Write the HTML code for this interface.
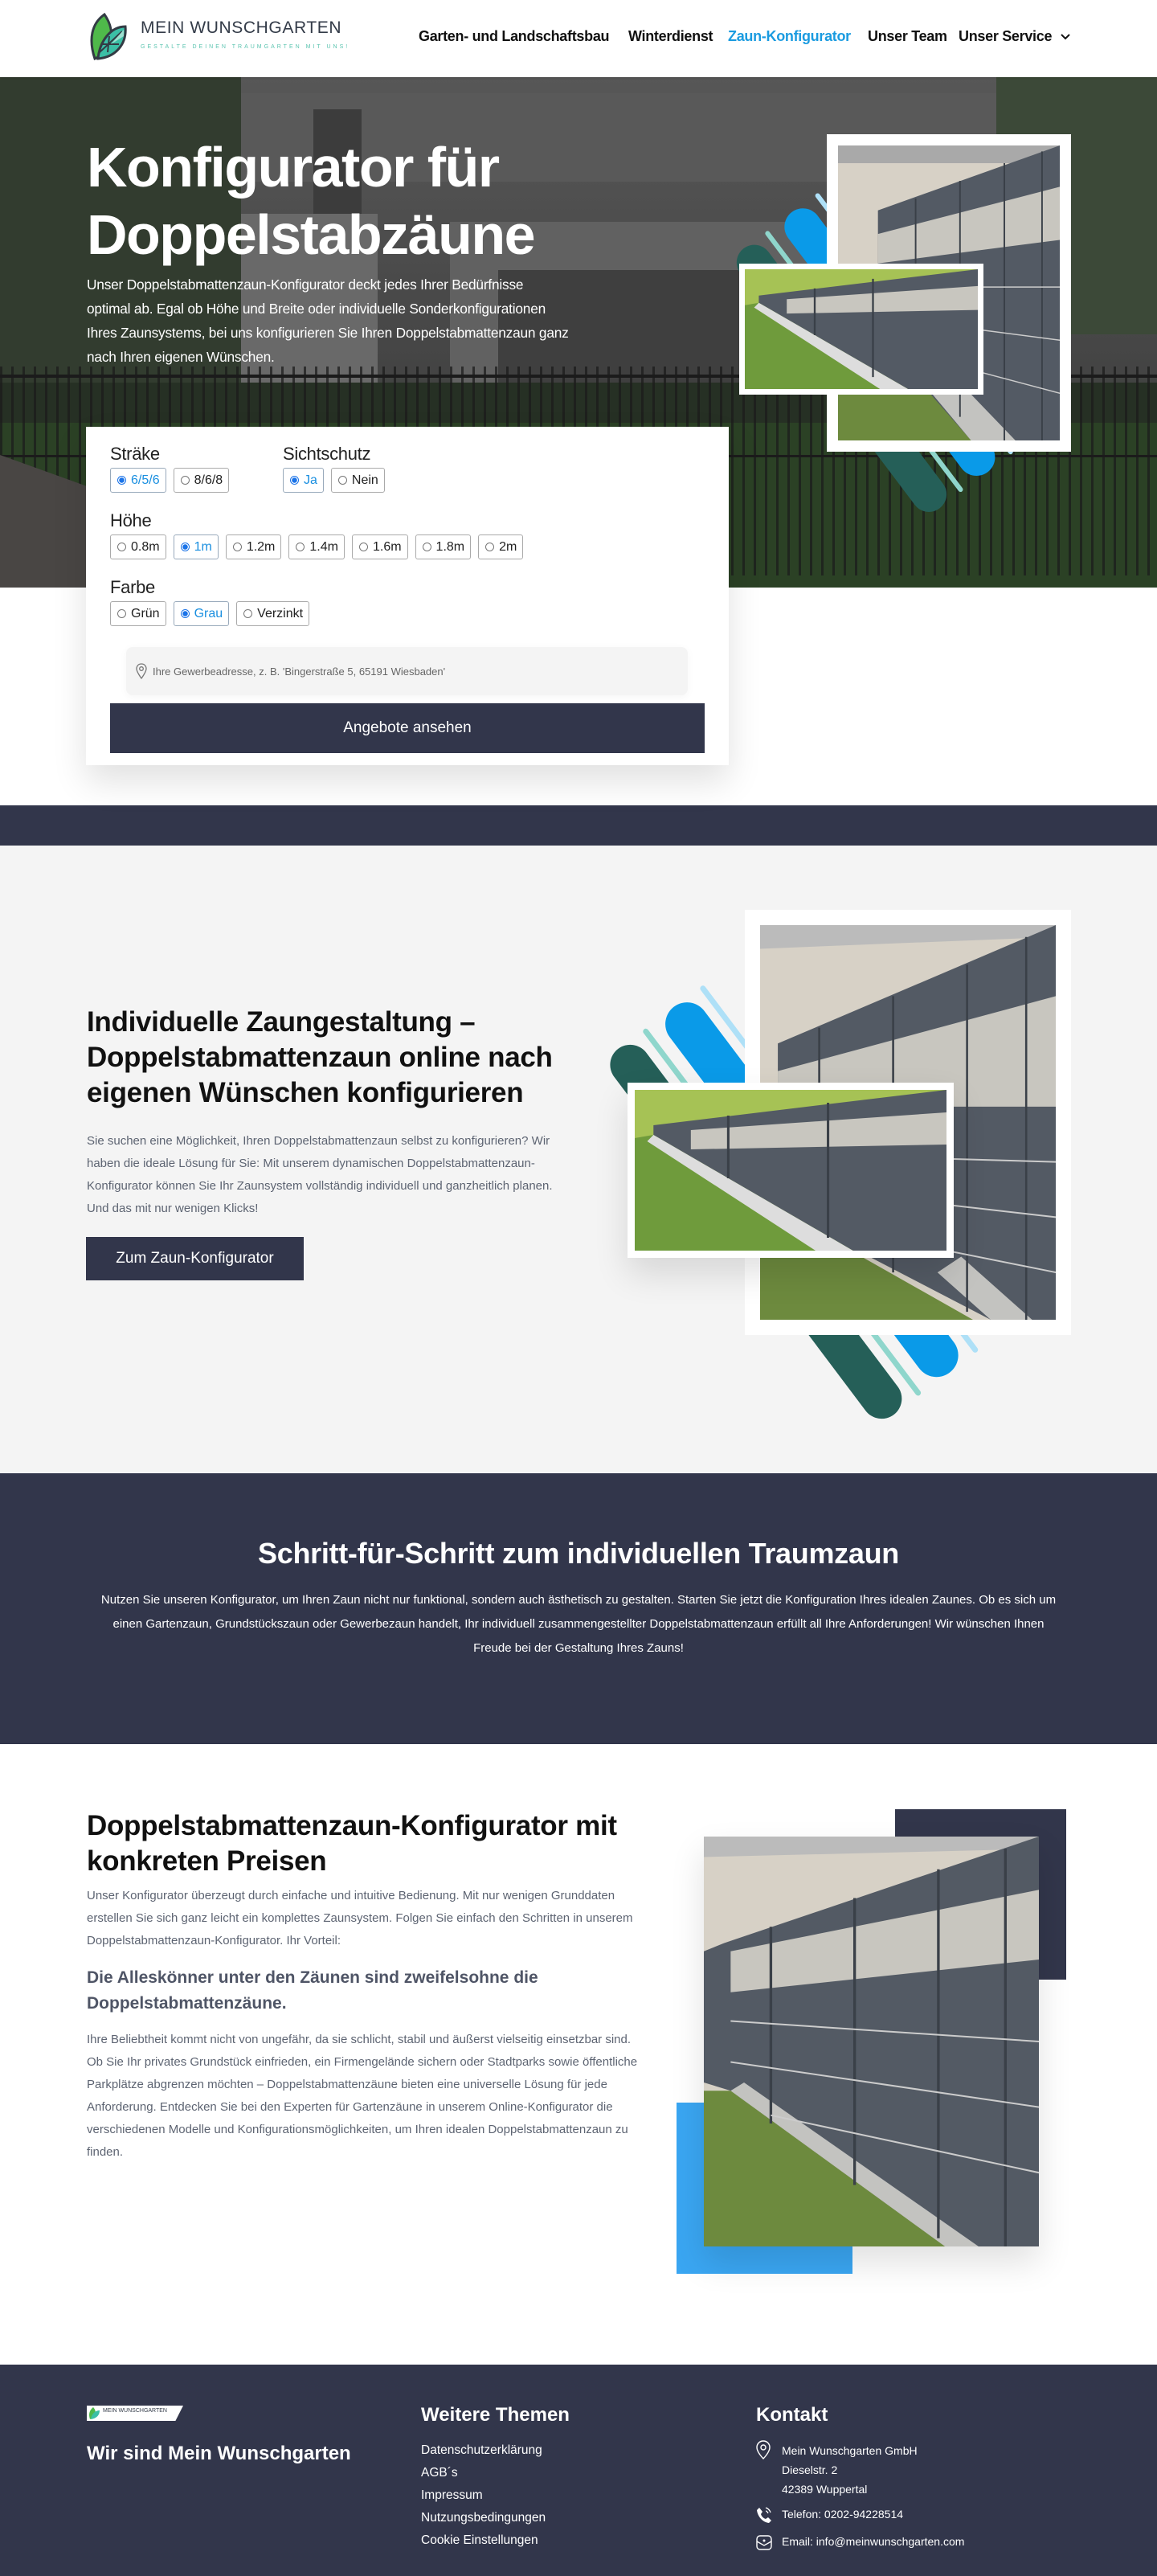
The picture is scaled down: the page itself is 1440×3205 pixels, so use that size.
<!DOCTYPE html>
<html lang="de"><head><meta charset="utf-8">
<style>
*{margin:0;padding:0;box-sizing:border-box}
body{width:1440px;height:3205px;font-family:"Liberation Sans",Arial,sans-serif;background:#fff;position:relative;overflow:hidden;color:#111}
.abs{position:absolute}
header{position:absolute;top:0;left:0;width:1440px;height:96px;background:#fff;z-index:5;box-shadow:0 1px 3px rgba(0,0,0,.15)}
.nav{position:absolute;top:35px;font-size:18px;font-weight:bold;color:#111;white-space:nowrap;letter-spacing:-0.3px}
.hero{position:absolute;top:96px;left:0;width:1440px;height:635px;overflow:hidden}
.frame{position:absolute;background:#fff}
.frame svg{position:absolute;display:block}
.bars{position:absolute;display:flex;align-items:stretch}
.bars div{border-radius:30px}
.opt{display:inline-flex;align-items:center;height:31px;border:1px solid #aaa;border-radius:3px;padding:0 7px 0 8px;font-size:16px;color:#222;margin-right:9px;background:#fff}
.opt i{display:inline-block;width:11px;height:11px;border:1px solid #777;border-radius:50%;margin-right:6px;background:#fff}
.opt.sel{color:#1a8fe0;border-color:#9ab}
.opt.sel i{border-color:#1a73e8;background:radial-gradient(circle,#1a73e8 0 3px,#fff 3.5px)}
.lbl{font-size:22px;color:#222;letter-spacing:-0.3px}
h2{font-size:35px;font-weight:bold;line-height:44px;color:#111;letter-spacing:-0.3px}
.p{font-size:15px;line-height:28px;color:#5d6472}
.flink{font-size:15.5px;color:#fff;line-height:28px}
</style></head><body>

<header>
  <svg class="abs" style="left:108px;top:15px" width="55" height="63" viewBox="0 0 55 63">
    <path d="M22 3 C6 14 2 34 10 58 C30 50 38 26 22 3Z" fill="#4fb94a" stroke="#333b44" stroke-width="3"/>
    <path d="M48 18 C30 18 16 36 14 58 C36 56 50 40 48 18Z" fill="#3bbfa6" stroke="#333b44" stroke-width="3"/>
    <path d="M16 50 L44 24 M20 40 L40 40 M28 30 L26 50" stroke="#333b44" stroke-width="2" fill="none"/>
    <path d="M30 40 L46 22 L46 30Z" fill="#9de0d0"/>
  </svg>
  <div class="abs" style="left:175px;top:23px;font-size:21px;color:#333b48;letter-spacing:0.6px">MEIN WUNSCHGARTEN</div>
  <div class="abs" style="left:175px;top:55px;font-size:7px;color:#5cc4b0;letter-spacing:3px">GESTALTE DEINEN TRAUMGARTEN MIT UNS!</div>
  <div class="nav" style="left:521px">Garten- und Landschaftsbau</div>
  <div class="nav" style="left:782px">Winterdienst</div>
  <div class="nav" style="left:906px;color:#1a9be0">Zaun-Konfigurator</div>
  <div class="nav" style="left:1080px">Unser Team</div>
  <div class="nav" style="left:1193px">Unser Service</div>
  <svg class="abs" style="left:1320px;top:41px" width="12" height="10" viewBox="0 0 12 10"><path d="M1 2 L6 7 L11 2" stroke="#111" stroke-width="2" fill="none"/></svg>
</header>

<div class="hero">
  <svg width="1440" height="635" viewBox="0 0 1440 635" style="position:absolute;left:0;top:0">
    <defs>
      <linearGradient id="hg" x1="0" y1="0" x2="0" y2="1"><stop offset="0" stop-color="#6b6b6b"/><stop offset=".55" stop-color="#555"/><stop offset="1" stop-color="#2f3a2c"/></linearGradient>
      <pattern id="fence" width="14" height="200" patternUnits="userSpaceOnUse"><rect width="14" height="200" fill="none"/><rect x="0" width="3" height="200" fill="#222"/></pattern>
    </defs>
    <rect width="1440" height="635" fill="url(#hg)"/>
    <rect x="0" y="0" width="300" height="380" fill="#3d4a3a"/>
    <rect x="1240" y="0" width="200" height="320" fill="#4a5a45"/>
    <rect x="300" y="20" width="940" height="110" fill="#6d6d6d"/>
    <rect x="390" y="40" width="60" height="400" fill="#4a4a4a"/>
    <rect x="560" y="180" width="460" height="230" fill="#777"/>
    <rect x="620" y="240" width="320" height="170" fill="#4d4d4d"/>
    <rect x="300" y="170" width="170" height="250" fill="#818181"/>
    <rect x="0" y="380" width="1440" height="255" fill="#2f3b2c"/>
    <rect x="0" y="430" width="1440" height="205" fill="#35502e"/>
    <rect x="0" y="360" width="1440" height="260" fill="url(#fence)" opacity=".75"/>
    <rect x="0" y="370" width="1440" height="4" fill="#222"/>
    <rect x="0" y="470" width="1440" height="3" fill="#222"/>
    <path d="M0 470 L250 560 L250 635 L0 635Z" fill="#5a5653"/>
    <rect width="1440" height="635" fill="#000" opacity=".18"/>
  </svg>
  <div class="abs" style="left:108px;top:70px;font-size:70px;font-weight:bold;color:#fff;line-height:84px;letter-spacing:-1.5px">Konfigurator für<br>Doppelstabzäune</div>
  <div class="abs" style="left:108px;top:243px;width:600px;font-size:17.3px;line-height:30px;color:#fff;letter-spacing:-0.2px">Unser Doppelstabmattenzaun-Konfigurator deckt jedes Ihrer Bedürfnisse optimal ab. Egal ob Höhe und Breite oder individuelle Sonderkonfigurationen Ihres Zaunsystems, bei uns konfigurieren Sie Ihren Doppelstabmattenzaun ganz nach Ihren eigenen Wünschen.</div>
</div>

<!-- hero bars -->
<div class="bars" style="left:1016px;top:240px;height:405px;transform:rotate(-37deg);z-index:1">
  <div style="width:44px;background:#255f58"></div><div style="width:10px;background:none"></div>
  <div style="width:6px;background:#8fd6cc"></div><div style="width:14px;background:none"></div>
  <div style="width:46px;background:#0a9ae8"></div><div style="width:12px;background:none"></div>
  <div style="width:6px;background:#aee0f7"></div>
</div>

<!-- hero frames -->
<div class="frame" style="left:1029px;top:167px;width:304px;height:395px;z-index:2">
  <svg style="left:14px;top:14px" width="276" height="367" viewBox="0 0 100 100" preserveAspectRatio="none">
    <rect width="100" height="100" fill="#d7d1c6"/>
    <rect x="0" y="0" width="100" height="6" fill="#a9a9a9"/>
    <polygon points="18,22 100,0 100,100 60,100 18,65" fill="#535a64"/>
    <polygon points="18,30 100,14 100,32 18,40" fill="#c8c6bf"/>
    <polygon points="0,62 18,64 60,100 0,100" fill="#6d8a3e"/>
    <polygon points="40,82 60,100 80,100 48,75" fill="#c3c3c0"/>
    <g stroke="#3a4048" stroke-width=".7"><line x1="35" y1="18" x2="35" y2="80"/><line x1="55" y1="12" x2="55" y2="92"/><line x1="75" y1="6" x2="75" y2="100"/><line x1="92" y1="2" x2="92" y2="100"/></g>
    <g stroke="#ccc" stroke-width=".4"><line x1="18" y1="48" x2="100" y2="48"/><line x1="18" y1="58" x2="100" y2="66"/><line x1="30" y1="70" x2="100" y2="84"/></g>
  </svg>
</div>
<div class="frame" style="left:920px;top:328px;width:304px;height:163px;z-index:3">
  <svg style="left:7px;top:7px" width="290" height="149" viewBox="0 0 100 100" preserveAspectRatio="none">
    <rect width="100" height="100" fill="#a6c255"/>
    <polygon points="6,22 100,0 100,100 70,100 6,28" fill="#535a64"/>
    <polygon points="18,25 100,14 100,34 18,37" fill="#c8c6bf"/>
    <polygon points="0,30 6,28 70,100 0,100" fill="#6f9b3c"/>
    <polygon points="6,28 70,100 58,100 4,32" fill="#ddd"/>
    <g stroke="#3a4048" stroke-width=".8"><line x1="30" y1="16" x2="30" y2="55"/><line x1="55" y1="8" x2="55" y2="90"/></g>
  </svg>
</div>

<!-- form card -->
<div class="abs" style="left:107px;top:531px;width:800px;height:421px;background:#fff;box-shadow:0 20px 40px rgba(0,0,0,.12);z-index:4">
  <div class="lbl abs" style="left:30px;top:21px">Sträke</div>
  <div class="lbl abs" style="left:245px;top:21px">Sichtschutz</div>
  <div class="abs" style="left:30px;top:51px"><span class="opt sel"><i></i>6/5/6</span><span class="opt"><i></i>8/6/8</span></div>
  <div class="abs" style="left:245px;top:51px"><span class="opt sel"><i></i>Ja</span><span class="opt"><i></i>Nein</span></div>
  <div class="lbl abs" style="left:30px;top:104px">Höhe</div>
  <div class="abs" style="left:30px;top:134px"><span class="opt"><i></i>0.8m</span><span class="opt sel"><i></i>1m</span><span class="opt"><i></i>1.2m</span><span class="opt"><i></i>1.4m</span><span class="opt"><i></i>1.6m</span><span class="opt"><i></i>1.8m</span><span class="opt"><i></i>2m</span></div>
  <div class="lbl abs" style="left:30px;top:187px">Farbe</div>
  <div class="abs" style="left:30px;top:217px"><span class="opt"><i></i>Grün</span><span class="opt sel"><i></i>Grau</span><span class="opt"><i></i>Verzinkt</span></div>
  <div class="abs" style="left:50px;top:274px;width:699px;height:60px;background:#f4f4f4;border-radius:8px;box-shadow:0 2px 10px rgba(0,0,0,.04)">
    <svg class="abs" style="left:12px;top:20px" width="14" height="20" viewBox="0 0 14 20"><path d="M7 1 C3 1 1 4 1 7 C1 11 7 19 7 19 C7 19 13 11 13 7 C13 4 11 1 7 1Z" fill="none" stroke="#777" stroke-width="1.3"/><circle cx="7" cy="7" r="2.3" fill="none" stroke="#777" stroke-width="1.3"/></svg>
    <div class="abs" style="left:33px;top:23px;font-size:13px;color:#666">Ihre Gewerbeadresse, z. B. 'Bingerstraße 5, 65191 Wiesbaden'</div>
  </div>
  <div class="abs" style="left:30px;top:344px;width:740px;height:62px;background:#32364b;color:#fff;font-size:19px;text-align:center;line-height:62px">Angebote ansehen</div>
</div>

<div class="abs" style="left:0;top:1002px;width:1440px;height:50px;background:#32364b"></div>

<!-- section 2 -->
<div class="abs" style="left:0;top:1052px;width:1440px;height:781px;background:#f4f4f4"></div>
<h2 class="abs" style="left:108px;top:1250px;width:620px">Individuelle Zaungestaltung – Doppelstabmattenzaun online nach eigenen Wünschen konfigurieren</h2>
<div class="p abs" style="left:108px;top:1406px;width:600px">Sie suchen eine Möglichkeit, Ihren Doppelstabmattenzaun selbst zu konfigurieren? Wir haben die ideale Lösung für Sie: Mit unserem dynamischen Doppelstabmattenzaun-Konfigurator können Sie Ihr Zaunsystem vollständig individuell und ganzheitlich planen. Und das mit nur wenigen Klicks!</div>
<div class="abs" style="left:107px;top:1539px;width:271px;height:54px;background:#32364b;color:#fff;font-size:19px;line-height:54px;text-align:center">Zum Zaun-Konfigurator</div>

<div class="bars" style="left:905px;top:1215px;height:570px;transform:rotate(-37deg)">
  <div style="width:50px;background:#255f58"></div><div style="width:12px"></div>
  <div style="width:7px;background:#8fd6cc"></div><div style="width:16px"></div>
  <div style="width:54px;background:#0a9ae8"></div><div style="width:12px"></div>
  <div style="width:7px;background:#aee0f7"></div>
</div>
<div class="frame" style="left:927px;top:1132px;width:406px;height:529px">
  <svg style="left:19px;top:19px" width="368" height="491" viewBox="0 0 100 100" preserveAspectRatio="none">
    <rect width="100" height="100" fill="#d7d1c6"/>
    <polygon points="0,0 100,0 100,3 0,6" fill="#bbb"/>
    <polygon points="6,30 100,0 100,100 78,100 6,72" fill="#535a64"/>
    <polygon points="6,37 100,18 100,46 6,46" fill="#c8c6bf"/>
    <polygon points="0,70 6,72 72,100 0,100" fill="#6d8a3e"/>
    <polygon points="60,88 78,100 92,100 68,84" fill="#c3c3c0"/>
    <g stroke="#3a4048" stroke-width=".7"><line x1="20" y1="26" x2="20" y2="78"/><line x1="45" y1="18" x2="45" y2="88"/><line x1="70" y1="10" x2="70" y2="98"/><line x1="90" y1="3" x2="90" y2="100"/></g>
    <g stroke="#ccc" stroke-width=".4"><line x1="6" y1="58" x2="100" y2="60"/><line x1="6" y1="66" x2="100" y2="74"/><line x1="20" y1="76" x2="100" y2="88"/></g>
  </svg>
</div>
<div class="frame" style="left:781px;top:1347px;width:406px;height:218px;box-shadow:0 20px 40px rgba(0,0,0,.12)">
  <svg style="left:9px;top:9px" width="388" height="200" viewBox="0 0 100 100" preserveAspectRatio="none">
    <rect width="100" height="100" fill="#a6c255"/>
    <polygon points="6,22 100,0 100,100 70,100 6,28" fill="#535a64"/>
    <polygon points="18,25 100,14 100,34 18,37" fill="#c8c6bf"/>
    <polygon points="0,30 6,28 70,100 0,100" fill="#6f9b3c"/>
    <polygon points="6,28 70,100 58,100 4,32" fill="#ddd"/>
    <g stroke="#3a4048" stroke-width=".8"><line x1="30" y1="16" x2="30" y2="55"/><line x1="62" y1="8" x2="62" y2="92"/></g>
  </svg>
</div>

<!-- section 3 dark -->
<div class="abs" style="left:0;top:1833px;width:1440px;height:337px;background:#32364b"></div>
<div class="abs" style="left:0;top:1912px;width:1440px;text-align:center;font-size:36px;font-weight:bold;color:#fff;letter-spacing:-0.3px">Schritt-für-Schritt zum individuellen Traumzaun</div>
<div class="abs" style="left:115px;top:1976px;width:1210px;text-align:center;font-size:15px;line-height:30px;color:#fff">Nutzen Sie unseren Konfigurator, um Ihren Zaun nicht nur funktional, sondern auch ästhetisch zu gestalten. Starten Sie jetzt die Konfiguration Ihres idealen Zaunes. Ob es sich um einen Gartenzaun, Grundstückszaun oder Gewerbezaun handelt, Ihr individuell zusammengestellter Doppelstabmattenzaun erfüllt all Ihre Anforderungen! Wir wünschen Ihnen Freude bei der Gestaltung Ihres Zauns!</div>

<!-- section 4 -->
<h2 class="abs" style="left:108px;top:2250px;width:720px">Doppelstabmattenzaun-Konfigurator mit konkreten Preisen</h2>
<div class="p abs" style="left:108px;top:2345px;width:700px">Unser Konfigurator überzeugt durch einfache und intuitive Bedienung. Mit nur wenigen Grunddaten erstellen Sie sich ganz leicht ein komplettes Zaunsystem. Folgen Sie einfach den Schritten in unserem Doppelstabmattenzaun-Konfigurator. Ihr Vorteil:</div>
<div class="abs" style="left:108px;top:2445px;width:600px;font-size:21px;font-weight:bold;line-height:32px;color:#4f5566">Die Alleskönner unter den Zäunen sind zweifelsohne die Doppelstabmattenzäune.</div>
<div class="p abs" style="left:108px;top:2524px;width:700px">Ihre Beliebtheit kommt nicht von ungefähr, da sie schlicht, stabil und äußerst vielseitig einsetzbar sind. Ob Sie Ihr privates Grundstück einfrieden, ein Firmengelände sichern oder Stadtparks sowie öffentliche Parkplätze abgrenzen möchten – Doppelstabmattenzäune bieten eine universelle Lösung für jede Anforderung. Entdecken Sie bei den Experten für Gartenzäune in unserem Online-Konfigurator die verschiedenen Modelle und Konfigurationsmöglichkeiten, um Ihren idealen Doppelstabmattenzaun zu finden.</div>
<div class="abs" style="left:1114px;top:2251px;width:213px;height:212px;background:#32364b"></div>
<div class="abs" style="left:842px;top:2616px;width:219px;height:213px;background:#3aa6f2"></div>
<div class="abs" style="left:876px;top:2285px;width:417px;height:510px;box-shadow:0 20px 40px rgba(0,0,0,.12)">
  <svg width="417" height="510" viewBox="0 0 100 100" preserveAspectRatio="none" style="display:block">
    <rect width="100" height="100" fill="#d7d1c6"/>
    <polygon points="0,0 100,0 100,3 0,5" fill="#bbb"/>
    <polygon points="0,28 6,26 100,0 100,100 72,100 8,62 0,60" fill="#535a64"/>
    <polygon points="8,28 100,13 100,30 8,38" fill="#c8c6bf"/>
    <polygon points="0,62 8,62 72,100 0,100" fill="#6d8a3e"/>
    <polygon points="8,62 72,100 82,100 12,60" fill="#c3c3c0"/>
    <g stroke="#3a4048" stroke-width=".8"><line x1="20" y1="22" x2="20" y2="70"/><line x1="45" y1="15" x2="45" y2="85"/><line x1="70" y1="8" x2="70" y2="98"/><line x1="90" y1="3" x2="90" y2="100"/></g>
    <g stroke="#ccc" stroke-width=".4"><line x1="8" y1="45" x2="100" y2="50"/><line x1="8" y1="55" x2="100" y2="66"/><line x1="20" y1="68" x2="100" y2="82"/></g>
  </svg>
</div>

<!-- footer -->
<div class="abs" style="left:0;top:2942px;width:1440px;height:263px;background:#32364b">
  <div class="abs" style="left:108px;top:51px;width:120px;height:19px;background:#fff;clip-path:polygon(0 0,100% 0,92% 100%,0 100%)">
    <svg class="abs" style="left:1px;top:1px" width="16" height="17" viewBox="0 0 16 17"><path d="M7 1 C2 5 1 10 3 16 C10 13 12 6 7 1Z" fill="#4fb94a"/><path d="M15 5 C9 5 5 10 4 16 C11 15 15 11 15 5Z" fill="#3bbfa6"/></svg>
    <div class="abs" style="left:20px;top:3px;font-size:7px;color:#333b48">MEIN WUNSCHGARTEN</div>
  </div>
  <div class="abs" style="left:108px;top:97px;font-size:24px;font-weight:bold;color:#fff">Wir sind Mein Wunschgarten</div>
  <div class="abs" style="left:524px;top:49px;font-size:24px;font-weight:bold;color:#fff">Weitere Themen</div>
  <div class="abs" style="left:524px;top:93px">
    <div class="flink">Datenschutzerklärung</div><div class="flink">AGB´s</div><div class="flink">Impressum</div><div class="flink">Nutzungsbedingungen</div><div class="flink">Cookie Einstellungen</div>
  </div>
  <div class="abs" style="left:941px;top:49px;font-size:24px;font-weight:bold;color:#fff">Kontakt</div>
  <svg class="abs" style="left:941px;top:94px" width="18" height="24" viewBox="0 0 18 24"><path d="M9 1 C4 1 1 5 1 9 C1 15 9 23 9 23 C9 23 17 15 17 9 C17 5 14 1 9 1Z" fill="none" stroke="#fff" stroke-width="1.4"/><circle cx="9" cy="9" r="3" fill="none" stroke="#fff" stroke-width="1.4"/></svg>
  <div class="abs" style="left:973px;top:95px;font-size:14px;line-height:24px;color:#fff">Mein Wunschgarten GmbH<br>Dieselstr. 2<br>42389 Wuppertal</div>
  <svg class="abs" style="left:941px;top:176px" width="20" height="22" viewBox="0 0 20 22"><path d="M4 2 L8 7 L6 10 C7 13 9 15 12 16 L15 14 L19 18 L16 21 C8 20 2 13 1 5Z" fill="#fff"/><path d="M12 2 C15 3 17 5 18 8 M12 6 C13 6 14 7 15 9" stroke="#fff" stroke-width="1.3" fill="none"/></svg>
  <div class="abs" style="left:973px;top:178px;font-size:14px;color:#fff">Telefon: 0202-94228514</div>
  <svg class="abs" style="left:941px;top:210px" width="20" height="22" viewBox="0 0 20 22"><rect x="1" y="3" width="18" height="17" rx="4" fill="none" stroke="#fff" stroke-width="1.4"/><path d="M1 10 L10 15 L19 10" stroke="#fff" stroke-width="1.3" fill="none"/><circle cx="10" cy="9" r="1.5" fill="#fff"/></svg>
  <div class="abs" style="left:973px;top:212px;font-size:14px;color:#fff">Email: info@meinwunschgarten.com</div>
</div>
</body></html>
